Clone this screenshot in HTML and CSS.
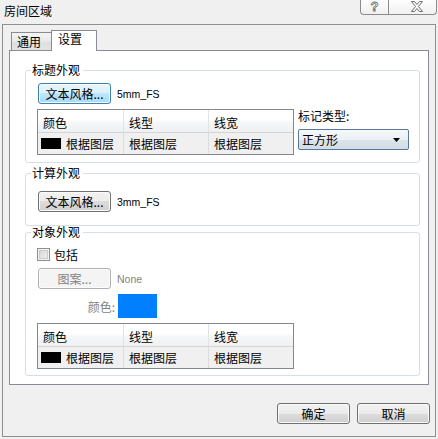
FILE: index.html
```html
<!DOCTYPE html>
<html>
<head>
<meta charset="utf-8">
<link rel="stylesheet" href="styles.css">
</head>
<body>
<div class="titlebar">
  <span class="title">房间区域</span>
  <div class="caption">
    <span class="cap-btn cap-help"><span class="help-glyph">?</span></span>
    <span class="cap-btn cap-close">
      <svg width="12" height="11" viewBox="0 0 12 11"><polygon points="0.5,0.5 3.5,0.5 6,3.5 8.5,0.5 11.5,0.5 7.5,5.5 11.5,10.5 8.5,10.5 6,7.5 3.5,10.5 0.5,10.5 4.5,5.5" fill="#fdfdfd" stroke="#6e6e6e" stroke-width="1"/></svg>
    </span>
  </div>
</div>
<div class="frame">
  <div class="tabs">
    <div class="tab">通用</div>
    <div class="tab active">设置</div>
  </div>
  <div class="panel">
    <fieldset class="group g1">
      <legend>标题外观</legend>
      <div class="g1-body">
        <div class="g1-left">
          <div class="row">
            <button class="btn hot">文本风格...</button>
            <span class="val">5mm_FS</span>
          </div>
          <div class="grid">
            <div class="grid-head">
              <div class="cell c1">颜色</div>
              <div class="cell c2">线型</div>
              <div class="cell c3">线宽</div>
            </div>
            <div class="grid-row">
              <div class="cell c1"><span class="swatch"></span>根据图层</div>
              <div class="cell c2">根据图层</div>
              <div class="cell c3">根据图层</div>
            </div>
          </div>
        </div>
        <div class="g1-right">
          <div class="lbl">标记类型:</div>
          <div class="combo">
            <span>正方形</span>
            <svg class="arrow" width="7" height="4" viewBox="0 0 7 4"><polygon points="0,0 7,0 3.5,4" fill="#000"/></svg>
          </div>
        </div>
      </div>
    </fieldset>
    <fieldset class="group g2">
      <legend>计算外观</legend>
      <div class="row">
        <button class="btn">文本风格...</button>
        <span class="val">3mm_FS</span>
      </div>
    </fieldset>
    <fieldset class="group g3">
      <legend>对象外观</legend>
      <div class="check-row">
        <span class="checkbox"></span>
        <span>包括</span>
      </div>
      <div class="row pattern-row">
        <button class="btn disabled">图案...</button>
        <span class="val dim">None</span>
      </div>
      <div class="color-row">
        <span class="color-lbl">颜色:</span>
        <span class="color-swatch"></span>
      </div>
      <div class="grid">
        <div class="grid-head">
          <div class="cell c1">颜色</div>
          <div class="cell c2">线型</div>
          <div class="cell c3">线宽</div>
        </div>
        <div class="grid-row">
          <div class="cell c1"><span class="swatch"></span>根据图层</div>
          <div class="cell c2">根据图层</div>
          <div class="cell c3">根据图层</div>
        </div>
      </div>
    </fieldset>
  </div>
  <div class="footer">
    <button class="btn">确定</button>
    <button class="btn">取消</button>
  </div>
</div>
</body>
</html>
```
FILE: styles.css
```css
* { box-sizing: border-box; }
html, body { margin: 0; padding: 0; }
body {
  width: 438px;
  height: 439px;
  overflow: hidden;
  background: #f0f0f0;
  font-family: "Noto Sans CJK SC", "Liberation Sans", sans-serif;
  font-size: 12px;
  color: #000;
}

.titlebar {
  height: 24px;
  display: flex;
  justify-content: space-between;
  align-items: flex-start;
}
.title {
  padding: 3px 0 0 4px;
  line-height: 16px;
}
.caption {
  display: flex;
  margin-right: 1px;
}
.cap-btn {
  height: 15px;
  border: 1px solid #8b8b8b;
  border-top: none;
  background: linear-gradient(#fdfdfd, #f1f1f1);
  display: flex;
  align-items: center;
  justify-content: center;
}
.cap-help {
  width: 28px;
  border-right: none;
  border-radius: 0 0 0 4px;
}
.cap-close {
  width: 49px;
  border-radius: 0 0 4px 0;
  padding: 0 0 2px 8px;
}
.help-glyph {
  font-family: "Liberation Sans", sans-serif;
  font-weight: bold;
  font-size: 13px;
  line-height: 13px;
  color: #fdfdfd;
  -webkit-text-stroke: 0.8px #6e6e6e;
  margin-top: -2px;
}

.frame {
  margin-left: 2px;
  width: 434px;
  height: 413px;
  border: 1px solid #8e8f8f;
  display: flex;
  flex-direction: column;
}
.tabs {
  display: flex;
  align-items: flex-end;
  height: 25px;
  padding: 5px 0 0 8px;
}
.tab {
  height: 18px;
  width: 41px;
  border: 1px solid #898c95;
  border-bottom: none;
  background: linear-gradient(#f4f4f4, #e9e9e9 50%, #dedede 51%, #e3e3e3);
  padding: 1px 0 0 5px;
  line-height: 16px;
}
.tab.active {
  position: relative;
  z-index: 1;
  height: 21px;
  width: 46px;
  margin-left: -1px;
  margin-bottom: -1px;
  background: #fff;
  padding: 0 0 0 6px;
}

.panel {
  margin: 0 6px;
  height: 335px;
  border: 1px solid #898c95;
  background: #fff;
  padding: 13px 8px 0 15px;
  display: flex;
  flex-direction: column;
}

.group {
  margin: 0;
  min-width: 0;
  border: 1px solid #d5dfe5;
  border-radius: 3px;
  padding: 7px 7px 7px 11px;
}
.group legend {
  padding: 0 3px 0 1px;
  margin-left: -6px;
  line-height: 12px;
}
.g2 { margin-top: 4px; padding-top: 12px; padding-bottom: 13px; }
.g3 { padding-top: 10px; padding-bottom: 6px; }

.g1-body {
  display: flex;
  align-items: flex-start;
}
.g1-right {
  margin-left: 4px;
  margin-top: 26px;
}
.lbl { line-height: 14px; }

.row {
  display: flex;
  align-items: center;
  height: 21px;
}
.val {
  margin-left: 6px;
  font-family: "Liberation Sans", sans-serif;
  font-size: 10.5px;
}
.val.dim { color: #838383; }

.btn {
  width: 73px;
  height: 21px;
  padding: 0;
  margin: 0;
  border: 1px solid #707070;
  border-radius: 3px;
  background: linear-gradient(#f2f2f2 0, #ebebeb 50%, #dddddd 50%, #cfcfcf 100%);
  box-shadow: inset 0 0 0 1px #fbfbfb;
  font-family: "Noto Sans CJK SC", sans-serif;
  font-size: 12px;
  line-height: 19px;
  color: #000;
}
.row .btn { margin-left: 1px; }
.btn.hot {
  border-color: #3c7fb1;
  background: linear-gradient(#eaf6fd 0, #d9f0fc 50%, #bee6fd 50%, #a7d9f5 100%);
  box-shadow: inset 0 0 0 1px #f3fbff;
}
.btn.disabled {
  border-color: #adb2b5;
  background: #f4f4f4;
  box-shadow: inset 0 0 0 1px #fcfcfc;
  color: #838383;
}

.grid {
  width: 257px;
  border: 1px solid #828790;
  margin-top: 5px;
}
.grid-head {
  display: flex;
  height: 23px;
  border-bottom: 1px solid #d5d5d5;
  background: linear-gradient(#ffffff 0, #ffffff 45%, #f6f7f8 55%, #eff0f2 100%);
}
.grid-row {
  display: flex;
  height: 21px;
  background: #f0f0f0;
}
.cell {
  padding-left: 5px;
  white-space: nowrap;
}
.grid-head .cell {
  padding-top: 6px;
  line-height: 14px;
}
.grid-row .cell {
  line-height: 21px;
  display: flex;
  align-items: center;
}
.c1 { width: 86px; border-right: 1px solid #e2e3e5; }
.c2 { width: 85px; border-right: 1px solid #e2e3e5; }
.c3 { width: 84px; }
.grid-row .c1 { padding-left: 3px; }
.grid-row .c1, .grid-row .c2 { border-right-color: #dcdcdc; }
.swatch {
  width: 20px;
  height: 11px;
  background: #000;
  margin-right: 5px;
}

.combo {
  margin-top: 6px;
  width: 111px;
  height: 21px;
  border: 1px solid #56789a;
  border-radius: 2px;
  background: linear-gradient(#f6f9fc 0, #eaf0f5 50%, #dbe4ec 51%, #d3dde7 100%);
  display: flex;
  align-items: center;
  justify-content: space-between;
  padding: 0 8px 0 3px;
  line-height: 19px;
}

.check-row {
  display: flex;
  align-items: center;
  height: 13px;
  line-height: 13px;
}
.checkbox {
  width: 13px;
  height: 13px;
  border: 1px solid #8e8f8f;
  background: linear-gradient(135deg, #cfd1d4, #f5f5f5);
  box-shadow: inset 0 0 0 1px #f4f4f4, inset 0 0 0 2px #c9cbcf;
  margin-right: 4px;
}
.pattern-row { margin-top: 7px; }

.color-row {
  display: flex;
  align-items: center;
  margin-top: 5px;
  height: 24px;
}
.color-lbl {
  width: 78px;
  text-align: right;
  color: #838383;
}
.color-swatch {
  margin-left: 3px;
  width: 39px;
  height: 24px;
  background: #0080ff;
}

.footer {
  display: flex;
  justify-content: flex-end;
  gap: 7px;
  margin-top: 18px;
  padding-right: 5px;
}
```
